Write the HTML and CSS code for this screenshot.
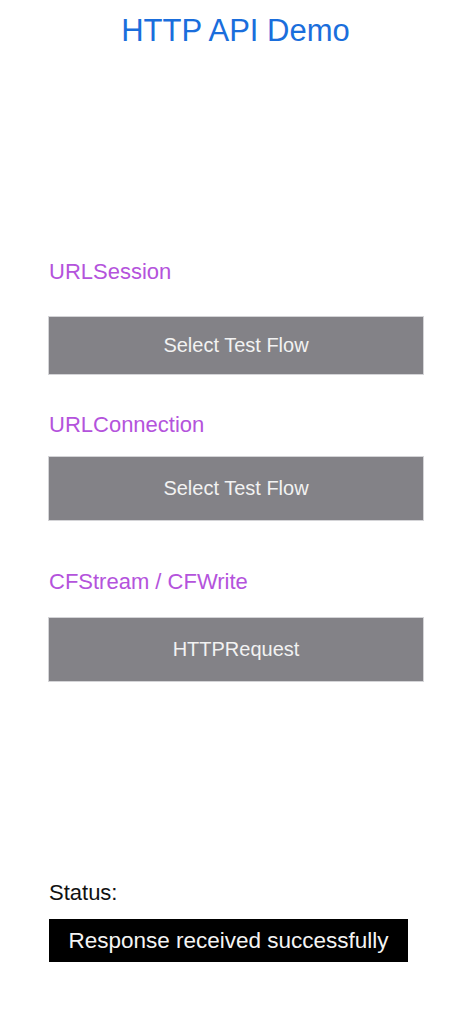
FILE: index.html
```html
<!DOCTYPE html>
<html>
<head>
<meta charset="utf-8">
<link rel="stylesheet" href="styles.css">
</head>
<body>
<div class="screen">
  <h1 class="title">HTTP API Demo</h1>
  <div class="content">
    <div class="label label-first">URLSession</div>
    <div class="button btn-1">Select Test Flow</div>
    <div class="label label-2">URLConnection</div>
    <div class="button btn-2">Select Test Flow</div>
    <div class="label label-3">CFStream / CFWrite</div>
    <div class="button btn-3">HTTPRequest</div>
    <div class="status-label">Status:</div>
    <div class="status-box">Response received successfully</div>
  </div>
</div>
</body>
</html>
```

FILE: styles.css
```css
html, body {
  margin: 0;
  padding: 0;
  background: #ffffff;
}
.screen {
  width: 471px;
  height: 1024px;
  font-family: "Liberation Sans", Arial, sans-serif;
  overflow: hidden;
}
.title {
  margin: 13px 0 0 0;
  font-size: 31px;
  line-height: 36px;
  font-weight: normal;
  text-align: center;
  color: #1a6edc;
}
.content {
  padding: 0 48px 0 49px;
  display: flex;
  flex-direction: column;
  align-items: flex-start;
}
.label {
  font-size: 22px;
  line-height: 26px;
  color: #b453dc;
}
.label-first { margin-top: 210px; }
.label-2 { margin-top: 38px; }
.label-3 { margin-top: 49px; }
.button {
  align-self: stretch;
  display: flex;
  align-items: center;
  justify-content: center;
  background: #838287;
  box-shadow: 0 0 0 1px #d4d4d7;
  color: #f2f2f2;
  font-size: 20px;
}
.btn-1 { margin-top: 32px; height: 57px; }
.btn-2 { margin-top: 19px; height: 63px; }
.btn-3 { margin-top: 23px; height: 63px; }
.status-label {
  margin-top: 199px;
  font-size: 22px;
  line-height: 26px;
  color: #111111;
}
.status-box {
  margin-top: 13px;
  width: 359px;
  height: 43px;
  background: #000000;
  color: #f4f4f4;
  font-size: 22.5px;
  display: flex;
  align-items: center;
  justify-content: center;
}
```
